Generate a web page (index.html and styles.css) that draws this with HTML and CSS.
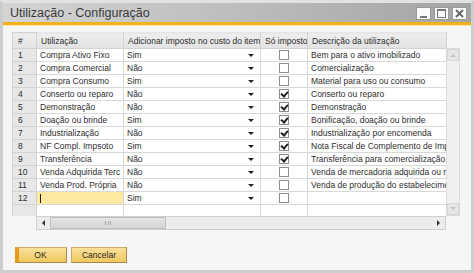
FILE: index.html
```html
<!DOCTYPE html>
<html lang="pt">
<head>
  <meta charset="UTF-8" />
  <title>Utilização - Configuração</title>
  <link rel="stylesheet" href="styles.css">
</head>
<body>
  <div class="window">
    <div class="titlebar">
      <span class="title">Utilização - Configuração</span>
      <div class="win-btns">
        <span class="wbtn"><svg width="9" height="9" viewBox="0 0 9 9"><rect x="1" y="7" width="7" height="2" fill="#777"/></svg></span>
        <span class="wbtn"><svg width="9" height="9" viewBox="0 0 9 9"><rect x="0.5" y="0.5" width="8" height="8" fill="none" stroke="#777"/><rect x="0.5" y="0.5" width="8" height="1.5" fill="#777"/></svg></span>
        <span class="wbtn"><svg width="9" height="9" viewBox="0 0 9 9"><path d="M1 1 L8 8 M8 1 L1 8" stroke="#666" stroke-width="1.8"/></svg></span>
      </div>
    </div>

    <div class="content">
      <div class="grid">
        <div class="grid-main">
          <table class="matrix">
            <thead>
              <tr>
                <th class="num">#</th>
                <th>Utilização</th>
                <th>Adicionar imposto no custo do item</th>
                <th>Só imposto</th>
                <th>Descrição da utilização</th>
              </tr>
            </thead>
            <tbody>
              <tr><td class="num">1</td><td>Compra Ativo Fixo</td><td><div class="combo">Sim<i class="arrow"></i></div></td><td class="chk"><span class="box"></span></td><td>Bem para o ativo imobilizado</td></tr>
              <tr><td class="num">2</td><td>Compra Comercial</td><td><div class="combo">Não<i class="arrow"></i></div></td><td class="chk"><span class="box"></span></td><td>Comercialização</td></tr>
              <tr><td class="num">3</td><td>Compra Consumo</td><td><div class="combo">Sim<i class="arrow"></i></div></td><td class="chk"><span class="box"></span></td><td>Material para uso ou consumo</td></tr>
              <tr><td class="num">4</td><td>Conserto ou reparo</td><td><div class="combo">Não<i class="arrow"></i></div></td><td class="chk"><span class="box checked"></span></td><td>Conserto ou reparo</td></tr>
              <tr><td class="num">5</td><td>Demonstração</td><td><div class="combo">Não<i class="arrow"></i></div></td><td class="chk"><span class="box checked"></span></td><td>Demonstração</td></tr>
              <tr><td class="num">6</td><td>Doação ou brinde</td><td><div class="combo">Sim<i class="arrow"></i></div></td><td class="chk"><span class="box checked"></span></td><td>Bonificação, doação ou brinde</td></tr>
              <tr><td class="num">7</td><td>Industrialização</td><td><div class="combo">Não<i class="arrow"></i></div></td><td class="chk"><span class="box checked"></span></td><td>Industrialização por encomenda</td></tr>
              <tr><td class="num">8</td><td>NF Compl. Impsoto</td><td><div class="combo">Sim<i class="arrow"></i></div></td><td class="chk"><span class="box checked"></span></td><td>Nota Fiscal de Complemento de Imposto</td></tr>
              <tr><td class="num">9</td><td>Transferência</td><td><div class="combo">Não<i class="arrow"></i></div></td><td class="chk"><span class="box checked"></span></td><td>Transferência para comercialização</td></tr>
              <tr><td class="num">10</td><td>Venda Adquirida Terc</td><td><div class="combo">Não<i class="arrow"></i></div></td><td class="chk"><span class="box"></span></td><td>Venda de mercadoria adquirida ou recebida</td></tr>
              <tr><td class="num">11</td><td>Venda Prod. Própria</td><td><div class="combo">Não<i class="arrow"></i></div></td><td class="chk"><span class="box"></span></td><td>Venda de produção do estabelecimento</td></tr>
              <tr><td class="num">12</td><td class="editing"><span class="caret"></span></td><td><div class="combo">Sim<i class="arrow"></i></div></td><td class="chk"><span class="box"></span></td><td></td></tr>
              <tr class="filler"><td class="num"></td><td></td><td></td><td></td><td></td></tr>
            </tbody>
          </table>
          <div class="hscroll">
            <span class="sbtn"><i class="arrow-left"></i></span>
            <span class="thumb"><span class="grip"></span></span>
            <span class="track"></span>
            <span class="sbtn"><i class="arrow-right"></i></span>
          </div>
        </div>
        <div class="vscroll">
          <span class="sbtn v"><i class="arrow-up"></i></span>
          <span class="track"></span>
          <span class="sbtn v"><i class="arrow-down"></i></span>
        </div>
      </div>

      <div class="buttons">
        <button class="btn default">OK</button>
        <button class="btn">Cancelar</button>
      </div>
    </div>
  </div>
</body>
</html>
```

FILE: styles.css
```css
* {
  margin: 0;
  padding: 0;
  box-sizing: border-box;
}

body {
  font-family: 'Liberation Sans', Arial, sans-serif;
  background: #f5f5f5;
  color: #333;
}

.window {
  width: 474px;
  height: 273px;
  border: 3px solid #cdcdcd;
  border-top-color: #e2e2e2;
  background: #f6f6f6;
  display: flex;
  flex-direction: column;
}

/* Title bar */
.titlebar {
  height: 22px;
  display: flex;
  align-items: center;
  justify-content: space-between;
  padding: 0 4px 0 7px;
  background: linear-gradient(to right, #d4d4d4, #bdbdbd 50%, #a4a4a4);
  border-bottom: 3px solid #f2b21f;
  box-shadow: 0 1px 0 #fbe3a4;
}

.title {
  font-size: 12.5px;
  color: #3a3a3a;
}

.win-btns {
  display: flex;
  gap: 3px;
  margin-top: 2px;
}

.wbtn {
  width: 15px;
  height: 13px;
  background: #fafafa;
  border: 1px solid #9a9a9a;
  display: flex;
  align-items: center;
  justify-content: center;
}

/* Content */
.content {
  flex: 1;
  padding: 7px 10px 0 9px;
  display: flex;
  flex-direction: column;
}

.grid {
  display: flex;
}

.grid-main {
  width: 434px;
  display: flex;
  flex-direction: column;
}

.matrix {
  border-collapse: collapse;
  table-layout: fixed;
  width: 434px;
  font-size: 8.5px;
  color: #2e2e2e;
}

.matrix th {
  height: 16px;
  font-weight: normal;
  text-align: left;
  padding: 0 4px;
  background: linear-gradient(#eeeeee, #e2e2e2);
  border: 1px solid #d2d2d2;
  border-top-color: #e6e6e6;
  white-space: nowrap;
  overflow: hidden;
}

.matrix th:nth-child(1) { width: 24px; }
.matrix th:nth-child(2) { width: 87px; }
.matrix th:nth-child(3) { width: 137px; }
.matrix th:nth-child(4) { width: 47px; }
.matrix th:nth-child(5) { width: 139px; }

.matrix td {
  height: 13px;
  padding: 0 3px;
  background: #fff;
  border: 1px solid #d8d8d8;
  white-space: nowrap;
  overflow: hidden;
  line-height: 11px;
}

.matrix .num {
  background: #e7e7e7;
  border-color: #d2d2d2;
  padding-left: 5px;
}

.matrix th.num {
  background: linear-gradient(#eeeeee, #e2e2e2);
}

.matrix tr.filler td {
  height: 11px;
  border-bottom: none;
}

.combo {
  display: flex;
  justify-content: space-between;
  align-items: center;
  padding-right: 3px;
}

.arrow {
  width: 0;
  height: 0;
  border-left: 3px solid transparent;
  border-right: 3px solid transparent;
  border-top: 3px solid #222;
}

.matrix td.chk {
  text-align: center;
  padding: 0;
}

.box {
  display: inline-block;
  width: 10px;
  height: 10px;
  border: 1px solid #8c8c8c;
  background: #fff;
  vertical-align: middle;
  position: relative;
}

.box.checked::after {
  content: "";
  position: absolute;
  left: 2px;
  top: 0px;
  width: 3px;
  height: 5px;
  border-right: 2px solid #222;
  border-bottom: 2px solid #222;
  transform: rotate(40deg);
}

.matrix td.editing {
  background: #fde9a0;
}

.caret {
  display: inline-block;
  width: 1px;
  height: 9px;
  background: #222;
  vertical-align: middle;
}

/* Scrollbars */
.hscroll {
  margin-left: 24px;
  height: 14px;
  display: flex;
  border: 1px solid #cfcfcf;
  background: #ececec;
}

.sbtn {
  width: 13px;
  display: flex;
  align-items: center;
  justify-content: center;
  background: #ececec;
}

.thumb {
  width: 116px;
  background: linear-gradient(#e4e4e4, #d6d6d6);
  border: 1px solid #bdbdbd;
  display: flex;
  align-items: center;
  justify-content: center;
}

.grip {
  width: 6px;
  height: 4px;
  border-left: 1px solid #a8a8a8;
  border-right: 1px solid #a8a8a8;
  background: linear-gradient(to right, transparent 2px, #a8a8a8 2px, #a8a8a8 3px, transparent 3px);
}

.track {
  flex: 1;
}

.arrow-left {
  border-top: 3px solid transparent;
  border-bottom: 3px solid transparent;
  border-right: 3px solid #333;
}

.arrow-right {
  border-top: 3px solid transparent;
  border-bottom: 3px solid transparent;
  border-left: 3px solid #333;
}

.vscroll {
  width: 14px;
  margin-top: 16px;
  margin-bottom: 14px;
  display: flex;
  flex-direction: column;
  border: 1px solid #dcdcdc;
  background: #f0f0f0;
}

.sbtn.v {
  width: 12px;
  height: 12px;
  background: #e6e6e6;
  border: 1px solid #d6d6d6;
}

.arrow-up {
  border-left: 3px solid transparent;
  border-right: 3px solid transparent;
  border-bottom: 3px solid #c4c4c4;
}

.arrow-down {
  border-left: 3px solid transparent;
  border-right: 3px solid transparent;
  border-top: 3px solid #c4c4c4;
}

/* Buttons */
.buttons {
  display: flex;
  gap: 4px;
  margin-top: 17px;
  padding-left: 3px;
}

.btn {
  height: 16px;
  font-family: 'Liberation Sans', Arial, sans-serif;
  font-size: 8.5px;
  color: #2a2a2a;
  background: linear-gradient(#fae09a, #efc85e);
  border: 1px solid #a8894a;
  border-top-color: #c9ac6a;
  border-left-color: #c9ac6a;
  width: 56px;
}

.btn.default {
  width: 52px;
  border-left: 4px solid #e89a1e;
  padding-right: 4px;
}
```
